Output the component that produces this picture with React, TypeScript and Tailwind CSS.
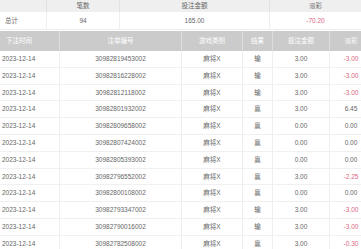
const rows = [
  { no: '30982819453002', res: '输', bet: '3.00', pay: '-3.00' },
  { no: '30982816228002', res: '输', bet: '3.00', pay: '-3.00' },
  { no: '30982812118002', res: '输', bet: '3.00', pay: '-3.00' },
  { no: '30982801932002', res: '赢', bet: '3.00', pay: '6.45' },
  { no: '30982809658002', res: '赢', bet: '0.00', pay: '0.00' },
  { no: '30982807424002', res: '赢', bet: '0.00', pay: '0.00' },
  { no: '30982805393002', res: '赢', bet: '0.00', pay: '0.00' },
  { no: '30982796552002', res: '赢', bet: '3.00', pay: '-2.25' },
  { no: '30982800108002', res: '赢', bet: '0.00', pay: '0.00' },
  { no: '30982793347002', res: '输', bet: '3.00', pay: '-3.00' },
  { no: '30982790016002', res: '输', bet: '3.00', pay: '-3.00' },
  { no: '30982782508002', res: '赢', bet: '3.00', pay: '-0.30' },
]

const cols = 'grid grid-cols-[60px_122px_61px_30px_57px_42px]'

export default function App() {
  return (
    <div
      className="w-[361px] h-[249px] overflow-hidden bg-white text-[6.5px] text-[#666]"
      style={{ fontFamily: '"Liberation Sans", "Noto Sans CJK SC", sans-serif' }}
    >
      {/* summary */}
      <div className="grid grid-cols-[47px_73px_150px_91px]">
        <div className="h-[12px] bg-[#efefef] border-r border-[#e2e2e2]"></div>
        <div className="h-[12px] bg-[#efefef] border-r border-[#e2e2e2] flex items-center justify-center">笔数</div>
        <div className="h-[12px] bg-[#efefef] border-r border-[#e2e2e2] flex items-center justify-center">投注金额</div>
        <div className="h-[12px] bg-[#efefef] flex items-center justify-center">派彩</div>

        <div className="h-[18px] border-b border-r border-[#eee] flex items-center pl-[5px]">总计</div>
        <div className="h-[18px] border-b border-r border-[#eee] flex items-center justify-center">94</div>
        <div className="h-[18px] border-b border-r border-[#eee] flex items-center justify-center">165.00</div>
        <div className="h-[18px] border-b border-[#eee] flex items-center justify-center text-[#e0667e]">-70.20</div>
      </div>

      {/* detail */}
      <div className="mt-[1px]">
        <div className={`${cols} h-[20px] bg-[#cbcbcb] text-white`}>
          <div className="flex items-center pl-[6px] border-r border-[#dedede]">下注时间</div>
          <div className="flex items-center justify-center border-r border-[#dedede]">注单编号</div>
          <div className="flex items-center justify-center border-r border-[#dedede]">游戏类别</div>
          <div className="flex items-center justify-center border-r border-[#dedede]">结果</div>
          <div className="flex items-center justify-center border-r border-[#dedede]">投注金额</div>
          <div className="flex items-center justify-center">派彩</div>
        </div>
        {rows.map((r) => (
          <div key={r.no} className={`${cols} h-[16.8px] border-b border-[#f0f0f0]`}>
            <div className="flex items-center pl-[2px] border-r border-[#eee]">2023-12-14</div>
            <div className="flex items-center justify-center border-r border-[#eee]">{r.no}</div>
            <div className="flex items-center justify-center border-r border-[#eee]">麻将X</div>
            <div className="flex items-center justify-center border-r border-[#eee]">{r.res}</div>
            <div className="flex items-center justify-center border-r border-[#eee]">{r.bet}</div>
            <div className={`flex items-center justify-center ${r.pay.startsWith('-') ? 'text-[#e0667e]' : ''}`}>{r.pay}</div>
          </div>
        ))}
      </div>
    </div>
  )
}
